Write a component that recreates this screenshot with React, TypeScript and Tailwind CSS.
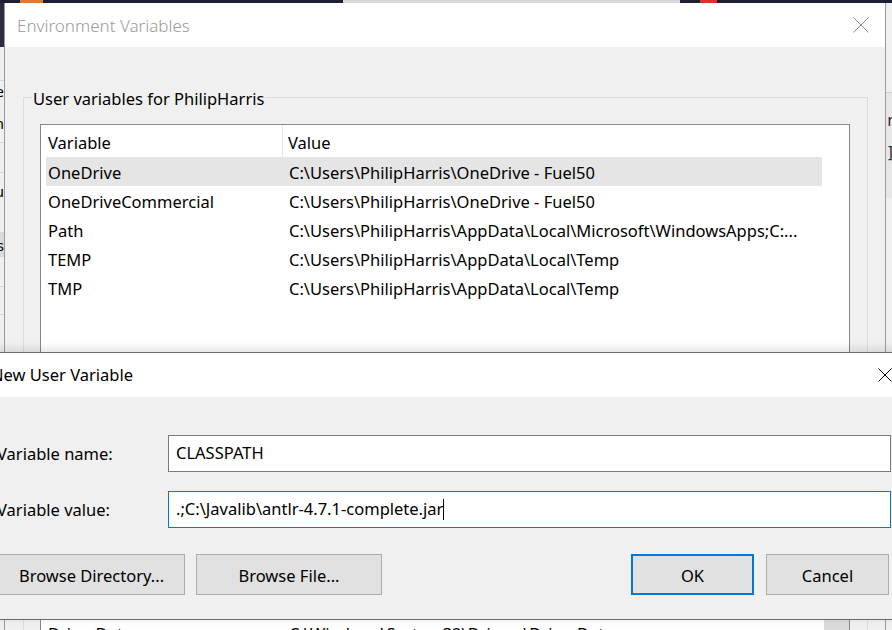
import React from 'react';

// Variables de l'utilisateur
const userVars = [
  { name: 'OneDrive', value: 'C:\\Users\\PhilipHarris\\OneDrive - Fuel50' },
  { name: 'OneDriveCommercial', value: 'C:\\Users\\PhilipHarris\\OneDrive - Fuel50' },
  { name: 'Path', value: 'C:\\Users\\PhilipHarris\\AppData\\Local\\Microsoft\\WindowsApps;C:...' },
  { name: 'TEMP', value: 'C:\\Users\\PhilipHarris\\AppData\\Local\\Temp' },
  { name: 'TMP', value: 'C:\\Users\\PhilipHarris\\AppData\\Local\\Temp' },
];

const systemVars = [
  { name: 'ComSpec', value: 'C:\\Windows\\system32\\cmd.exe' },
  { name: 'DriverData', value: 'C:\\Windows\\System32\\Drivers\\DriverData' },
  { name: 'NUMBER_OF_PROCESSORS', value: '8' },
];

const CloseIcon = ({ size, color }: { size: number; color: string }) => (
  <svg width={size} height={size} viewBox={`0 0 ${size} ${size}`} fill="none">
    <path d={`M0.5 0.5L${size - 0.5} ${size - 0.5}M${size - 0.5} 0.5L0.5 ${size - 0.5}`} stroke={color} strokeWidth="1" />
  </svg>
);

const VarList = ({ rows, highlight, scroll }: { rows: { name: string; value: string }[]; highlight?: number; scroll?: boolean }) => (
  <div className="ml-[16px] flex h-[262px] w-[810px] border border-[#828790] bg-white">
    <div className="flex-1">
      <div className="flex h-[32px] items-center">
        <div className="flex h-full w-[242px] items-center border-r border-[#e5e5e5] pl-[7px] pt-[4px]">Variable</div>
        <div className="pl-[5px] pt-[4px]">Value</div>
      </div>
      {rows.map((r, i) => (
        <div key={r.name} className={`ml-[5px] flex h-[29px] w-[776px] items-center whitespace-nowrap pt-[3px] ${i === highlight ? 'bg-[#e5e5e5]' : ''}`}>
          <div className="w-[238px] pl-[2px]">{r.name}</div>
          <div className="overflow-hidden pl-[5px]">{r.value}</div>
        </div>
      ))}
    </div>
    {scroll && <div className="w-[25px] bg-[#dadada]" />}
  </div>
);

const GroupBox = ({ label, className, children }: { label: string; className: string; children: React.ReactNode }) => (
  <div className={`relative w-[845px] border border-[#dcdcdc] pt-[26px] ${className}`}>
    <span className="absolute left-[8px] top-[-9px] bg-[#f0f0f0] px-[1px] leading-[20px]">{label}</span>
    {children}
  </div>
);

const App = () => {
  return (
    <div className="relative h-[630px] w-[892px] overflow-hidden bg-[#f0f0f0] font-['Noto_Sans',sans-serif] text-[16.5px] text-black">
      {/* bande du haut (fenêtres derrière) */}
      <div className="flex h-[3px] bg-[#1d1e34]">
        <div className="ml-[20px] w-[23px] bg-[#e8772e]" />
        <div className="ml-[300px] w-[337px] bg-[#d9d9d9]" />
        <div className="ml-[20px] w-[17px] bg-[#d9342b]" />
      </div>

      <div className="flex h-[627px]">
        {/* bord gauche d'une autre fenêtre */}
        <div className="flex w-[4px] flex-col overflow-hidden text-[15px] leading-[20px]">
          <div className="h-[44px] bg-[#2b2c40]" />
          <div className="h-[34px] border-b border-[#d4d4d4]" />
          <div className="flex h-[22px] justify-end">e</div>
          <div className="flex h-[40px] items-center justify-end border-b border-[#d4d4d4]">n</div>
          <div className="h-[30px] border-b border-[#d4d4d4]" />
          <div className="flex h-[28px] items-end justify-end">u</div>
          <div className="h-[32px] border-b border-[#d4d4d4]" />
          <div className="flex h-[24px] items-center justify-end bg-[#dadada]">s</div>
          <div className="h-[30px] border-b border-[#d4d4d4]" />
          <div className="h-[28px] border-b border-[#d4d4d4]" />
        </div>

        {/* fenêtre Environment Variables */}
        <div className="flex h-[627px] w-[882px] shrink-0 flex-col border-x border-[#9a9a9a] bg-[#f0f0f0]">
          <div className="flex h-[44px] shrink-0 items-center justify-between bg-white pl-[12px] pr-[16px]">
            <span className="pt-[1px] text-[17px] font-light text-[#9b9b9b]">Environment Variables</span>
            <CloseIcon size={16} color="#8a8a8a" />
          </div>
          <div className="pl-[18px] pt-[50px]">
            <GroupBox label="User variables for PhilipHarris" className="h-[404px]">
              <VarList rows={userVars} highlight={0} />
            </GroupBox>
            <GroupBox label="System variables" className="mt-[28px] h-[200px]">
              <VarList rows={systemVars} scroll />
            </GroupBox>
          </div>
        </div>

        {/* bord droit d'une autre fenêtre */}
        <div className="flex w-[6px] flex-col overflow-hidden font-['DejaVu_Sans_Mono',monospace] text-[15px] leading-[20px]">
          <div className="h-[89px] shrink-0" />
          <div className="h-[106px] shrink-0 border-t border-[#d0d0d0] bg-[#e6e6e6] pt-[18px] text-[#2a2a2a]">
            <div>r</div>
            <div className="mt-[12px]">]</div>
          </div>
        </div>
      </div>

      {/* boîte New User Variable, par-dessus */}
      <div className="absolute left-[-12px] top-[352px] flex h-[268px] w-[916px] flex-col border-y border-[#6b6b6b] shadow-[0_-3px_10px_rgba(0,0,0,0.12)]">
        <div className="flex h-[44px] shrink-0 items-center justify-between bg-white pl-[3px] pr-[12px]">
          <span className="text-[16.5px]">New User Variable</span>
          <CloseIcon size={14} color="#000" />
        </div>
        <div className="flex-1 bg-[#f0f0f0] pl-[9px] pt-[38px]">
          <div className="flex items-center">
            <div className="w-[171px] pt-[1px]">Variable name:</div>
            <div className="flex h-[37px] w-[723px] items-center border border-[#7a7a7a] bg-white px-[7px]">CLASSPATH</div>
          </div>
          <div className="mt-[19px] flex items-center">
            <div className="w-[171px] pt-[1px]">Variable value:</div>
            <div className="flex h-[37px] w-[723px] items-center border border-[#0078d7] bg-white px-[7px]">
              <span>{'.;C:\\Javalib\\antlr-4.7.1-complete.jar'}</span>
              <span className="h-[21px] w-px bg-black" />
            </div>
          </div>
          <div className="mt-[26px] flex">
            <button className="ml-[1px] h-[41px] w-[187px] border border-[#adadad] bg-[#e1e1e1] pt-[3px]">Browse Directory...</button>
            <button className="ml-[11px] h-[41px] w-[186px] border border-[#adadad] bg-[#e1e1e1] pt-[3px]">Browse File...</button>
            <button className="ml-[249px] h-[41px] w-[123px] border-2 border-[#0078d7] bg-[#e1e1e1] pt-[3px]">OK</button>
            <button className="ml-[12px] h-[41px] w-[123px] border border-[#adadad] bg-[#e1e1e1] pt-[3px]">Cancel</button>
          </div>
        </div>
      </div>
    </div>
  );
};

export default App;
